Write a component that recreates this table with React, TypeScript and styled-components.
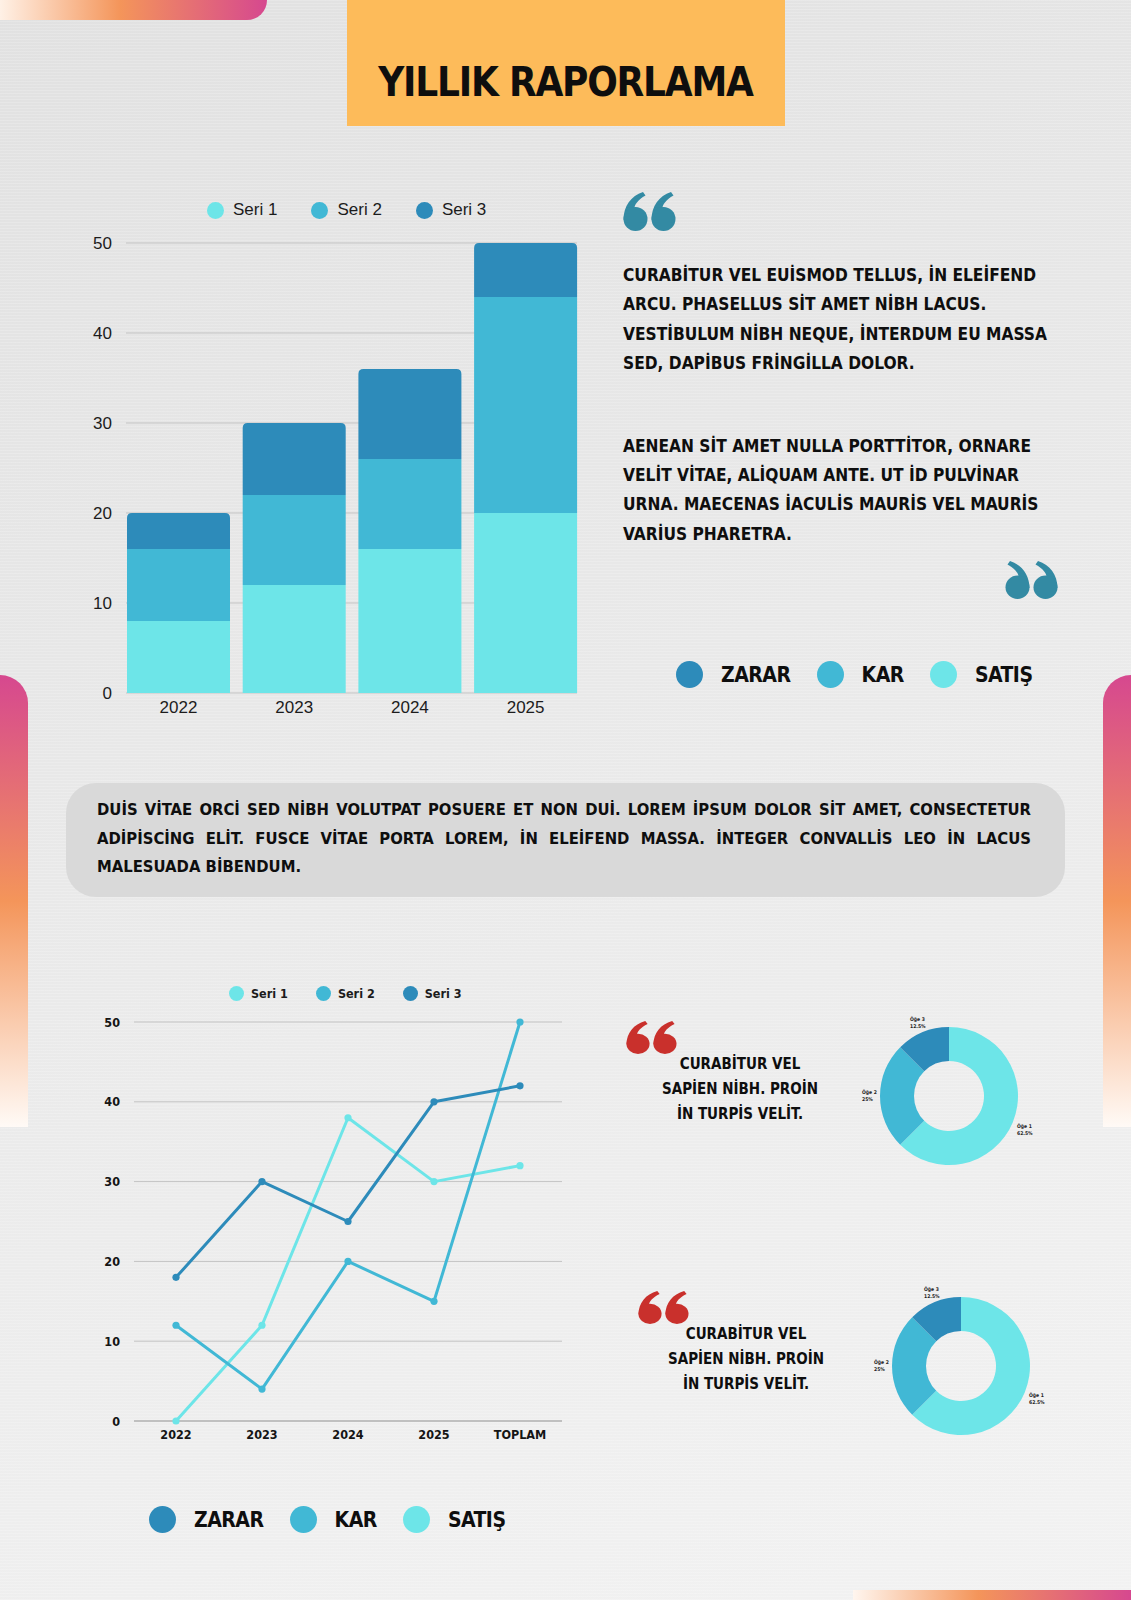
import React from "react";
import styled, { createGlobalStyle } from "styled-components";

const palette = {
    seri1: "#6de5e8",
    seri2: "#41b8d5",
    seri3: "#2d8bba",
    teal: "#338aa3",
    red: "#c9302c",
    title: "#fdbb5a",
    box: "#d9d9d9",
    ink: "#0e0e0e",
    grid: "#c3c3c3",
    pink: "#d6488f",
    orange: "#f4955a",
};

const DISPLAY = `"DejaVu Sans Condensed", "DejaVu Sans", sans-serif`;
const PLAIN = `"Liberation Sans", Arial, sans-serif`;

const GlobalStyle = createGlobalStyle`
    body {
        margin: 0;
        background: #ececec;
    }
`;

const Page = styled.div`
    position: relative;
    width: 1131px;
    height: 1600px;
    overflow: hidden;
    background:
        repeating-linear-gradient(0deg, rgba(255, 255, 255, 0.18) 0 1px, transparent 1px 3px),
        linear-gradient(160deg, #e1e1e1 0%, #e9e9e9 45%, #f2f2f2 100%);
    color: ${palette.ink};
`;

/* decorations */
const TopCorner = styled.div`
    position: absolute;
    top: 0;
    left: 0;
    width: 267px;
    height: 20px;
    border-bottom-right-radius: 20px;
    background: linear-gradient(90deg, #fff1e6 0%, ${palette.orange} 45%, ${palette.pink} 100%);
`;

const SideBar = styled.div<{ $side: "left" | "right" }>`
    position: absolute;
    top: 675px;
    ${(p) => p.$side}: 0;
    width: 28px;
    height: 452px;
    ${(p) => (p.$side === "left" ? "border-top-right-radius: 28px;" : "border-top-left-radius: 28px;")}
    background: linear-gradient(180deg, ${palette.pink} 0%, ${palette.orange} 50%, #fffaf6 100%);
`;

const BottomCorner = styled.div`
    position: absolute;
    right: 0;
    bottom: 0;
    width: 278px;
    height: 10px;
    background: linear-gradient(90deg, #fff6ef 0%, ${palette.orange} 45%, ${palette.pink} 100%);
`;

/* header */
const Header = styled.header`
    display: flex;
    justify-content: center;
`;

const TitleBox = styled.div`
    width: 438px;
    height: 126px;
    box-sizing: border-box;
    padding-top: 38px;
    background: ${palette.title};
    display: flex;
    align-items: center;
    justify-content: center;
`;

const Title = styled.h1`
    margin: 0;
    font-family: ${DISPLAY};
    font-weight: 700;
    font-size: 40px;
    letter-spacing: -1.2px;
    line-height: 1;
    white-space: nowrap;
    color: ${palette.ink};
`;

/* top section */
const TopSection = styled.section`
    display: flex;
    margin-top: 66px;
`;

const ChartCol = styled.div`
    margin-left: 85px;
    width: 500px;
    display: flex;
    flex-direction: column;
    padding-top: 8px;
`;

const SeriesLegend = styled.div<{ $pad: number; $gap: number }>`
    display: flex;
    align-items: center;
    height: 20px;
    padding-left: ${(p) => p.$pad}px;
    gap: ${(p) => p.$gap}px;
`;

const SeriesItem = styled.div<{ $plain?: boolean }>`
    display: flex;
    align-items: center;
    gap: ${(p) => (p.$plain ? 9 : 7)}px;
    font-family: ${(p) => (p.$plain ? PLAIN : DISPLAY)};
    font-weight: ${(p) => (p.$plain ? 400 : 700)};
    font-size: ${(p) => (p.$plain ? 17 : 12.5)}px;
    color: #1c1c1c;
`;

const Dot = styled.span<{ $color: string; $size: number }>`
    display: block;
    width: ${(p) => p.$size}px;
    height: ${(p) => p.$size}px;
    border-radius: 50%;
    background: ${(p) => p.$color};
    flex-shrink: 0;
`;

const BarSvg = styled.svg`
    display: block;
    margin-top: 5px;
    text {
        font-family: ${PLAIN};
        font-size: 17px;
        fill: #1c1c1c;
    }
`;

const TextCol = styled.div`
    margin-left: 38px;
    width: 440px;
    display: flex;
    flex-direction: column;
`;

const QuoteSvg = styled.svg<{ $flip?: boolean }>`
    display: block;
    align-self: ${(p) => (p.$flip ? "flex-end" : "flex-start")};
    margin-right: ${(p) => (p.$flip ? 5 : 0)}px;
    margin-top: ${(p) => (p.$flip ? 12 : 0)}px;
`;

const Para = styled.p<{ $top: number }>`
    margin: ${(p) => p.$top}px 0 0;
    font-family: ${DISPLAY};
    font-weight: 700;
    font-size: 17.2px;
    line-height: 29.4px;
    color: ${palette.ink};
`;

const KeyLegend = styled.div<{ $top: number; $pad: number }>`
    display: flex;
    align-items: center;
    gap: 26px;
    margin-top: ${(p) => p.$top}px;
    padding-left: ${(p) => p.$pad}px;
    height: 27px;
`;

const KeyItem = styled.div`
    display: flex;
    align-items: center;
    gap: 18px;
    font-family: ${DISPLAY};
    font-weight: 700;
    font-size: 21px;
    letter-spacing: -0.5px;
    color: ${palette.ink};
`;

/* info box */
const InfoBox = styled.div`
    margin: 58px 0 0 66px;
    width: 999px;
    height: 114px;
    box-sizing: border-box;
    padding: 13px 34px 0 31px;
    background: ${palette.box};
    border-radius: 30px;
`;

const InfoText = styled.p`
    margin: 0;
    font-family: ${DISPLAY};
    font-weight: 700;
    font-size: 16.5px;
    line-height: 28.5px;
    text-align: justify;
    color: ${palette.ink};
`;

/* bottom section */
const BottomSection = styled.section`
    display: flex;
    margin-top: 86px;
`;

const LineCol = styled.div`
    margin-left: 90px;
    width: 490px;
    display: flex;
    flex-direction: column;
`;

const LineSvg = styled.svg`
    display: block;
    margin-top: 3px;
    text {
        font-family: ${DISPLAY};
        font-weight: 700;
        font-size: 12.5px;
        fill: #151515;
    }
`;

const DonutCol = styled.div`
    margin-left: 46px;
    margin-top: 23px;
    display: flex;
    flex-direction: column;
    gap: 90px;
`;

const DonutRow = styled.div<{ $shift: number }>`
    display: flex;
    align-items: flex-start;
    margin-left: ${(p) => p.$shift}px;
`;

const QuoteBlock = styled.div`
    width: 228px;
    padding-top: 15px;
    display: flex;
    flex-direction: column;
`;

const QuoteText = styled.p<{ $indent: number }>`
    margin: -2px 0 0 ${(p) => p.$indent}px;
    width: 200px;
    text-align: center;
    font-family: ${DISPLAY};
    font-weight: 700;
    font-size: 15px;
    line-height: 25px;
    color: ${palette.ink};
`;

const DonutSvg = styled.svg`
    display: block;
    flex-shrink: 0;
    text {
        font-family: ${DISPLAY};
        font-weight: 700;
        font-size: 5px;
        fill: #222;
    }
`;

/* drawings */
const QUOTE_PATH = (ox: number) =>
    `M${ox + 0.5},28 C${ox + 0.5},14 ${ox + 8},4 ${ox + 20},0 L${ox + 22.5},3.5 C${ox + 15},7.5 ${ox + 11.5},13 ${ox + 11.5},16 Z`;

const QuoteMark: React.FC<{ color: string; w: number; h: number; flip?: boolean }> = ({ color, w, h, flip }) => (
    <QuoteSvg $flip={flip} width={w} height={h} viewBox="0 0 53 39" preserveAspectRatio="none">
        <g fill={color} transform={flip ? "translate(53 0) scale(-1 1)" : undefined}>
            <path d={QUOTE_PATH(0)} />
            <circle cx={12.5} cy={27} r={12} />
            <path d={QUOTE_PATH(28)} />
            <circle cx={40.5} cy={27} r={12} />
        </g>
    </QuoteSvg>
);

const seriesColors = [palette.seri1, palette.seri2, palette.seri3];

const barData = [
    { year: "2022", values: [8, 8, 4] },
    { year: "2023", values: [12, 10, 8] },
    { year: "2024", values: [16, 10, 10] },
    { year: "2025", values: [20, 24, 6] },
];

const roundTop = (x: number, y: number, w: number, h: number, r: number) =>
    `M${x},${y + h} V${y + r} Q${x},${y} ${x + r},${y} H${x + w - r} Q${x + w},${y} ${x + w},${y + r} V${y + h} Z`;

const BarChart = () => {
    const base = 468;
    const k = 9;
    const barW = 103;
    return (
        <BarSvg width={500} height={500} viewBox="0 0 500 500">
            {[0, 10, 20, 30, 40, 50].map((v) => (
                <g key={v}>
                    <line x1={41} x2={492} y1={base - v * k} y2={base - v * k} stroke={palette.grid} strokeWidth={1} />
                    <text x={27} y={base - v * k + 6} textAnchor="end">
                        {v}
                    </text>
                </g>
            ))}
            {barData.map((d, i) => {
                const x = 42 + i * 115.7;
                let acc = 0;
                return (
                    <g key={d.year}>
                        {d.values.map((v, j) => {
                            const y = base - (acc + v) * k;
                            acc += v;
                            const h = v * k;
                            return j === d.values.length - 1 ? (
                                <path key={j} d={roundTop(x, y, barW, h, 5)} fill={seriesColors[j]} />
                            ) : (
                                <rect key={j} x={x} y={y} width={barW} height={h} fill={seriesColors[j]} />
                            );
                        })}
                        <text x={x + barW / 2} y={488} textAnchor="middle">
                            {d.year}
                        </text>
                    </g>
                );
            })}
        </BarSvg>
    );
};

const lineSeries = [
    { color: palette.seri1, values: [0, 12, 38, 30, 32] },
    { color: palette.seri2, values: [12, 4, 20, 15, 50] },
    { color: palette.seri3, values: [18, 30, 25, 40, 42] },
];
const lineLabels = ["2022", "2023", "2024", "2025", "TOPLAM"];

const LineChart = () => {
    const y = (v: number) => 415 - v * 7.98;
    const x = (i: number) => 86 + i * 86;
    return (
        <LineSvg width={490} height={445} viewBox="0 0 490 445">
            {[0, 10, 20, 30, 40, 50].map((v) => (
                <g key={v}>
                    <line x1={44} x2={472} y1={y(v)} y2={y(v)} stroke={v === 0 ? "#b0b0b0" : palette.grid} strokeWidth={v === 0 ? 1.5 : 1} />
                    <text x={30} y={y(v) + 4.5} textAnchor="end">
                        {v}
                    </text>
                </g>
            ))}
            {lineLabels.map((l, i) => (
                <text key={l} x={x(i)} y={433} textAnchor="middle">
                    {l}
                </text>
            ))}
            {lineSeries.map((s) => (
                <g key={s.color}>
                    <polyline
                        points={s.values.map((v, i) => `${x(i)},${y(v)}`).join(" ")}
                        fill="none"
                        stroke={s.color}
                        strokeWidth={3}
                        strokeLinejoin="round"
                    />
                    {s.values.map((v, i) => (
                        <circle key={i} cx={x(i)} cy={y(v)} r={3.6} fill={s.color} />
                    ))}
                </g>
            ))}
        </LineSvg>
    );
};

const donutSlices = [
    { color: palette.seri1, from: 0, to: 225 },
    { color: palette.seri2, from: 225, to: 315 },
    { color: palette.seri3, from: 315, to: 360 },
];

const polar = (cx: number, cy: number, r: number, deg: number) => {
    const a = (deg * Math.PI) / 180;
    return [cx + r * Math.sin(a), cy - r * Math.cos(a)];
};

const slicePath = (cx: number, cy: number, ro: number, ri: number, from: number, to: number) => {
    const large = to - from > 180 ? 1 : 0;
    const [x1, y1] = polar(cx, cy, ro, from);
    const [x2, y2] = polar(cx, cy, ro, to);
    const [x3, y3] = polar(cx, cy, ri, to);
    const [x4, y4] = polar(cx, cy, ri, from);
    return `M${x1},${y1} A${ro},${ro} 0 ${large} 1 ${x2},${y2} L${x3},${y3} A${ri},${ri} 0 ${large} 0 ${x4},${y4} Z`;
};

type DonutLabel = { name: string; value: string; dx: number; dy: number };

const Donut: React.FC<{ labels: DonutLabel[] }> = ({ labels }) => {
    const cx = 95;
    const cy = 90;
    return (
        <DonutSvg width={190} height={180} viewBox="0 0 190 180">
            {donutSlices.map((s) => (
                <path key={s.color} d={slicePath(cx, cy, 69, 35, s.from, s.to)} fill={s.color} />
            ))}
            {labels.map((l) => (
                <text key={l.name} x={cx + l.dx} y={cy + l.dy}>
                    <tspan x={cx + l.dx}>{l.name}</tspan>
                    <tspan x={cx + l.dx} dy={7}>
                        {l.value}
                    </tspan>
                </text>
            ))}
        </DonutSvg>
    );
};

const donutLabelsA: DonutLabel[] = [
    { name: "Öğe 3", value: "12.5%", dx: -39, dy: -75 },
    { name: "Öğe 2", value: "25%", dx: -87, dy: -2 },
    { name: "Öğe 1", value: "62.5%", dx: 68, dy: 32 },
];

const donutLabelsB: DonutLabel[] = [
    { name: "Öğe 3", value: "12.5%", dx: -37, dy: -75 },
    { name: "Öğe 2", value: "25%", dx: -87, dy: -2 },
    { name: "Öğe 1", value: "62.5%", dx: 68, dy: 31 },
];

const keys = [
    { label: "ZARAR", color: palette.seri3 },
    { label: "KAR", color: palette.seri2 },
    { label: "SATIŞ", color: palette.seri1 },
];

const Keys: React.FC<{ top: number; pad: number }> = ({ top, pad }) => (
    <KeyLegend $top={top} $pad={pad}>
        {keys.map((k) => (
            <KeyItem key={k.label}>
                <Dot $color={k.color} $size={27} />
                {k.label}
            </KeyItem>
        ))}
    </KeyLegend>
);

const SeriesKeys: React.FC<{ plain?: boolean; pad: number; gap: number; size: number }> = ({ plain, pad, gap, size }) => (
    <SeriesLegend $pad={pad} $gap={gap}>
        {seriesColors.map((c, i) => (
            <SeriesItem key={c} $plain={plain}>
                <Dot $color={c} $size={size} />
                Seri {i + 1}
            </SeriesItem>
        ))}
    </SeriesLegend>
);

const QuoteRow: React.FC<{ shift: number; indent: number; labels: DonutLabel[] }> = ({ shift, indent, labels }) => (
    <DonutRow $shift={shift}>
        <QuoteBlock>
            <QuoteMark color={palette.red} w={51} h={33} />
            <QuoteText $indent={indent}>
                CURABİTUR VEL
                <br />
                SAPİEN NİBH. PROİN
                <br />
                İN TURPİS VELİT.
            </QuoteText>
        </QuoteBlock>
        <Donut labels={labels} />
    </DonutRow>
);

const App = () => {
    return (
        <>
            <GlobalStyle />
            <Page>
                <TopCorner />
                <SideBar $side="left" />
                <SideBar $side="right" />
                <BottomCorner />

                <Header>
                    <TitleBox>
                        <Title>YILLIK RAPORLAMA</Title>
                    </TitleBox>
                </Header>

                <TopSection>
                    <ChartCol>
                        <SeriesKeys plain pad={122} gap={34} size={17} />
                        <BarChart />
                    </ChartCol>
                    <TextCol>
                        <QuoteMark color={palette.teal} w={53} h={39} />
                        <Para $top={30}>
                            CURABİTUR VEL EUİSMOD TELLUS, İN ELEİFEND ARCU. PHASELLUS SİT AMET NİBH LACUS.
                            VESTİBULUM NİBH NEQUE, İNTERDUM EU MASSA SED, DAPİBUS FRİNGİLLA DOLOR.
                        </Para>
                        <Para $top={53}>
                            AENEAN SİT AMET NULLA PORTTİTOR, ORNARE VELİT VİTAE, ALİQUAM ANTE. UT İD PULVİNAR
                            URNA. MAECENAS İACULİS MAURİS VEL MAURİS VARİUS PHARETRA.
                        </Para>
                        <QuoteMark color={palette.teal} w={53} h={38} flip />
                        <Keys top={62} pad={53} />
                    </TextCol>
                </TopSection>

                <InfoBox>
                    <InfoText>
                        DUİS VİTAE ORCİ SED NİBH VOLUTPAT POSUERE ET NON DUİ. LOREM İPSUM DOLOR SİT AMET,
                        CONSECTETUR ADİPİSCİNG ELİT. FUSCE VİTAE PORTA LOREM, İN ELEİFEND MASSA. İNTEGER
                        CONVALLİS LEO İN LACUS MALESUADA BİBENDUM.
                    </InfoText>
                </InfoBox>

                <BottomSection>
                    <LineCol>
                        <SeriesKeys pad={139} gap={28} size={15} />
                        <LineChart />
                    </LineCol>
                    <DonutCol>
                        <QuoteRow shift={0} indent={14} labels={donutLabelsA} />
                        <QuoteRow shift={12} indent={8} labels={donutLabelsB} />
                    </DonutCol>
                </BottomSection>

                <Keys top={50} pad={149} />
            </Page>
        </>
    );
};

export default App;
